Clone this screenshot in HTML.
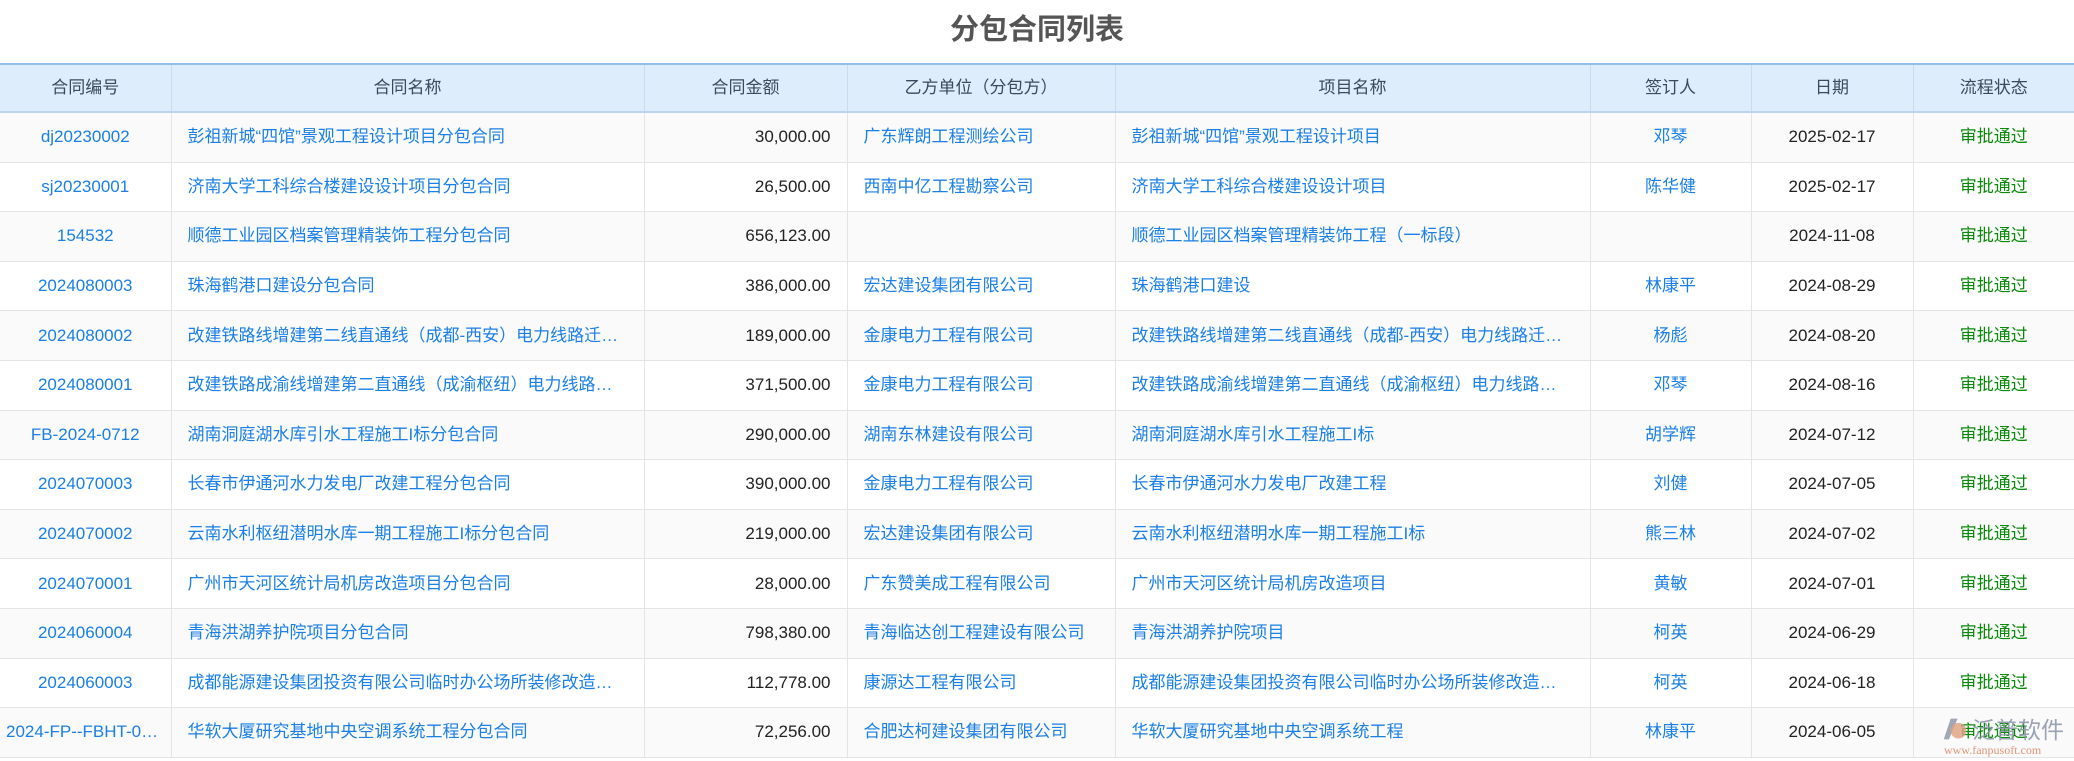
<!DOCTYPE html>
<html><head><meta charset="utf-8"><style>
html,body{margin:0;padding:0;background:#fff;width:2074px;height:761px;overflow:hidden;font-family:"Liberation Sans","Noto Sans CJK SC",sans-serif;}
h1{margin:0;height:63px;line-height:60px;text-align:center;font-size:29px;font-weight:bold;color:#555;}
table{border-collapse:collapse;table-layout:fixed;width:2074px;font-size:17px;}
th{height:46px;padding:0;line-height:22px;background:#deedfb;color:#3a4a5c;font-weight:normal;border-left:1px solid #c9dcee;border-top:2px solid #91bfe8;border-bottom:2px solid #b9d5ef;vertical-align:middle;}
td{height:48.6px;line-height:22px;vertical-align:middle;border-left:1px solid #e4e4e4;border-bottom:1px solid #e4e4e4;white-space:nowrap;overflow:hidden;text-overflow:ellipsis;padding:0 22px 0 16px;color:#1a7fe6;}
th:first-child,td:first-child{border-left:none;}
tr:nth-child(even) td{background:#fafafa;}
td.c{text-align:center;padding:0 6px;}
td.r{text-align:right;color:#222;padding:0 16px;}
td.d{text-align:center;color:#222;padding:0 6px;}
td.s{text-align:center;color:#0a8a0a;padding:0 6px;}
.wm{position:absolute;left:1942px;top:712px;width:132px;height:46px;white-space:nowrap;}
</style></head><body>
<h1>分包合同列表</h1>
<table>
<colgroup><col style="width:171px"><col style="width:473px"><col style="width:203px"><col style="width:268px"><col style="width:475px"><col style="width:161px"><col style="width:162px"><col style="width:161px"></colgroup>
<tr><th>合同编号</th><th>合同名称</th><th>合同金额</th><th>乙方单位（分包方）</th><th>项目名称</th><th>签订人</th><th>日期</th><th>流程状态</th></tr>
<tr><td class="c">dj20230002</td><td>彭祖新城“四馆”景观工程设计项目分包合同</td><td class="r">30,000.00</td><td>广东辉朗工程测绘公司</td><td>彭祖新城“四馆”景观工程设计项目</td><td class="c">邓琴</td><td class="d">2025-02-17</td><td class="s">审批通过</td></tr>
<tr><td class="c">sj20230001</td><td>济南大学工科综合楼建设设计项目分包合同</td><td class="r">26,500.00</td><td>西南中亿工程勘察公司</td><td>济南大学工科综合楼建设设计项目</td><td class="c">陈华健</td><td class="d">2025-02-17</td><td class="s">审批通过</td></tr>
<tr><td class="c">154532</td><td>顺德工业园区档案管理精装饰工程分包合同</td><td class="r">656,123.00</td><td></td><td>顺德工业园区档案管理精装饰工程（一标段）</td><td class="c"></td><td class="d">2024-11-08</td><td class="s">审批通过</td></tr>
<tr><td class="c">2024080003</td><td>珠海鹤港口建设分包合同</td><td class="r">386,000.00</td><td>宏达建设集团有限公司</td><td>珠海鹤港口建设</td><td class="c">林康平</td><td class="d">2024-08-29</td><td class="s">审批通过</td></tr>
<tr><td class="c">2024080002</td><td>改建铁路线增建第二线直通线（成都-西安）电力线路迁改工程分包合同</td><td class="r">189,000.00</td><td>金康电力工程有限公司</td><td>改建铁路线增建第二线直通线（成都-西安）电力线路迁改工程</td><td class="c">杨彪</td><td class="d">2024-08-20</td><td class="s">审批通过</td></tr>
<tr><td class="c">2024080001</td><td>改建铁路成渝线增建第二直通线（成渝枢纽）电力线路迁改分包合同</td><td class="r">371,500.00</td><td>金康电力工程有限公司</td><td>改建铁路成渝线增建第二直通线（成渝枢纽）电力线路迁改工程</td><td class="c">邓琴</td><td class="d">2024-08-16</td><td class="s">审批通过</td></tr>
<tr><td class="c">FB-2024-0712</td><td>湖南洞庭湖水库引水工程施工I标分包合同</td><td class="r">290,000.00</td><td>湖南东林建设有限公司</td><td>湖南洞庭湖水库引水工程施工I标</td><td class="c">胡学辉</td><td class="d">2024-07-12</td><td class="s">审批通过</td></tr>
<tr><td class="c">2024070003</td><td>长春市伊通河水力发电厂改建工程分包合同</td><td class="r">390,000.00</td><td>金康电力工程有限公司</td><td>长春市伊通河水力发电厂改建工程</td><td class="c">刘健</td><td class="d">2024-07-05</td><td class="s">审批通过</td></tr>
<tr><td class="c">2024070002</td><td>云南水利枢纽潜明水库一期工程施工I标分包合同</td><td class="r">219,000.00</td><td>宏达建设集团有限公司</td><td>云南水利枢纽潜明水库一期工程施工I标</td><td class="c">熊三林</td><td class="d">2024-07-02</td><td class="s">审批通过</td></tr>
<tr><td class="c">2024070001</td><td>广州市天河区统计局机房改造项目分包合同</td><td class="r">28,000.00</td><td>广东赞美成工程有限公司</td><td>广州市天河区统计局机房改造项目</td><td class="c">黄敏</td><td class="d">2024-07-01</td><td class="s">审批通过</td></tr>
<tr><td class="c">2024060004</td><td>青海洪湖养护院项目分包合同</td><td class="r">798,380.00</td><td>青海临达创工程建设有限公司</td><td>青海洪湖养护院项目</td><td class="c">柯英</td><td class="d">2024-06-29</td><td class="s">审批通过</td></tr>
<tr><td class="c">2024060003</td><td>成都能源建设集团投资有限公司临时办公场所装修改造项目分包合同</td><td class="r">112,778.00</td><td>康源达工程有限公司</td><td>成都能源建设集团投资有限公司临时办公场所装修改造项目工程</td><td class="c">柯英</td><td class="d">2024-06-18</td><td class="s">审批通过</td></tr>
<tr><td class="c">2024-FP--FBHT-0001</td><td>华软大厦研究基地中央空调系统工程分包合同</td><td class="r">72,256.00</td><td>合肥达柯建设集团有限公司</td><td>华软大厦研究基地中央空调系统工程</td><td class="c">林康平</td><td class="d">2024-06-05</td><td class="s">审批通过</td></tr>
</table>
<div class="wm">
<svg width="26" height="26" style="position:absolute;left:0;top:4px" viewBox="0 0 30 28"><path d="M10 2 L18 2 L8 26 L2 26 Z" fill="#8a93a8" opacity=".8"/><circle cx="19" cy="16" r="9" fill="#e0a080" opacity=".8"/></svg>
<div style="position:absolute;left:30px;top:2px;font-family:'Noto Sans CJK SC',sans-serif;font-size:23px;line-height:28px;color:#8a93a8;opacity:.85">泛普软件</div>
<div style="position:absolute;left:2px;top:32px;font-family:'Liberation Serif',serif;font-size:12px;line-height:12px;color:#e0957a">www.fanpusoft.com</div>
</div>
</body></html>
